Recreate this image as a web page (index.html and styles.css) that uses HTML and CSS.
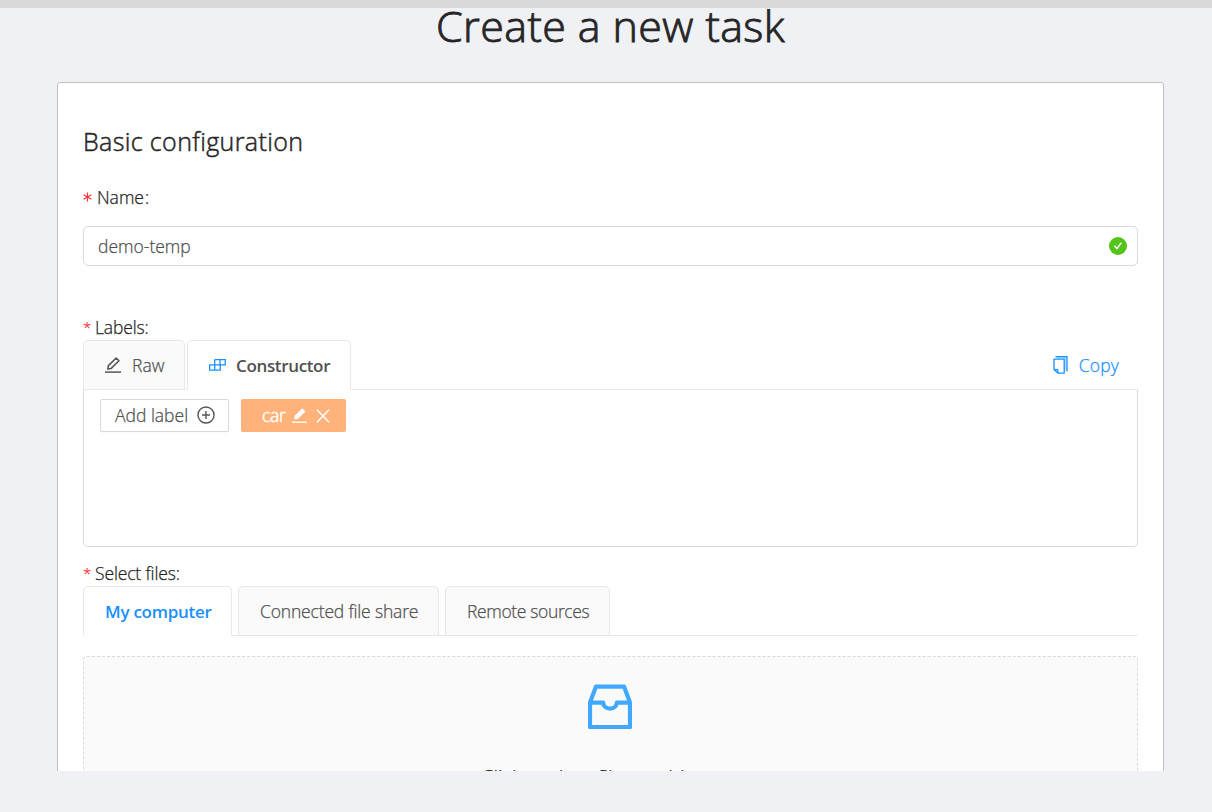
FILE: index.html
```html
<!DOCTYPE html>
<html lang="en">
<head>
<meta charset="utf-8">
<title>Create a new task</title>
<link rel="stylesheet" href="styles.css">
</head>
<body>
<div class="topbar"></div>
<main class="page">
  <h1 class="page-title">Create a new task</h1>
  <section class="card">
    <h2 class="card-title">Basic configuration</h2>
    <label class="field-label"><svg class="star" viewBox="0 0 9 10"><path d="M4.5 .5v9M.6 2.7l7.8 4.6M8.4 2.7L.6 7.3"/></svg><span>Name</span><span class="colon">:</span></label>
    <div class="input"><span>demo-temp</span>
      <svg class="ok" viewBox="0 0 18 18"><circle cx="9" cy="9" r="9" fill="#52c41a"/><path d="M5.4 8.8l2.6 2.8 4.3-6" fill="none" stroke="#fff" stroke-width="1.6"/></svg>
    </div>
    <div class="group-label labels-label"><i>*</i><span>Labels:</span></div>
    <div class="tabs">
      <div class="tab tab-raw">
        <svg class="ico-edit" viewBox="0 0 16 16" fill="none" stroke="#555"><path d="M0 15.1h16" stroke-width="1.5"/><path d="M2.8 12l.6-3.4L11.2 1l2.8 2.7-7.8 7.7z" stroke-width="1.5" stroke-linejoin="round"/></svg>
        <span>Raw</span></div>
      <div class="tab tab-constructor active">
        <svg class="ico-build" viewBox="0 0 17 12" fill="none" stroke="#1890ff" stroke-width="1.3"><path d="M5.6 .7h10.7v5.1h-5.1v5.4H.7V5.8h10.5M5.7 .7v10.5M11 .7v5.1"/></svg>
        <span>Constructor</span></div>
      <a class="copy"><svg class="ico-copy" viewBox="0 0 15 18" fill="none"><path d="M3.6 1.8h9.2v13.5" stroke="#9dd1ff" stroke-width="1.2"/><path d="M2.5 .7H14v14.6" stroke="#1890ff" stroke-width="1.3"/><path d="M1 3.2h10.2v14H5L1 13.4z" stroke="#1890ff" stroke-width="1.3" fill="#fff"/><path d="M1 13.4h4v3.8z" fill="#7dc1ff" stroke="#1890ff"/></svg><span>Copy</span></a>
    </div>
    <div class="label-box">
      <button class="add"><span>Add label</span><svg class="ico-plus" viewBox="0 0 18 18" fill="none" stroke="#555" stroke-width="1.4"><circle cx="9" cy="9" r="8"/><path d="M9 5v8M5 9h8"/></svg></button>
      <div class="chip"><span>car</span>
        <svg class="ico-pen" viewBox="0 0 15 15"><path d="M0 14.2h15" stroke="#fff" stroke-width="1.4"/><path d="M2 11.6l.7-3.8L10.3 .2l3.2 3.2-7.7 7.5z" fill="#fff"/></svg>
        <svg class="ico-x" viewBox="0 0 14 14"><path d="M1 .7l12 12.6M13 .7L1 13.3" stroke="#fff" stroke-width="1.5"/></svg></div>
    </div>
    <div class="group-label files-label"><i>*</i><span>Select files:</span></div>
    <div class="tabs">
      <div class="tab tab-my active"><span>My computer</span></div>
      <div class="tab tab-share"><span>Connected file share</span></div>
      <div class="tab tab-remote"><span>Remote sources</span></div>
    </div>
    <div class="drop">
      <svg class="ico-inbox" viewBox="0 0 44 45" fill="none" stroke="#40a9ff" stroke-width="4.2" stroke-linejoin="round"><path d="M8 2.6h28l6 16V43H2V18.6z"/><path d="M2 18.6h13.2c0 3.6 3 6 6.8 6s6.8-2.4 6.8-6H42"/></svg>
      <p class="drop-text">Click or drag files to this area</p>
    </div>
  </section>
</main>
</body>
</html>
```
FILE: styles.css
```css
* { box-sizing: border-box; }
body {
  margin: 0;
  background: #f0f1f5;
  color: #505050;
  font: 300 17.5px "Open Sans", "Noto Sans", sans-serif;
  -webkit-text-stroke: 0.25px currentColor;
}
svg { display: block; flex: none; }
span { white-space: nowrap; }

.topbar { height: 8px; background: #d9d9d9; }
.page { height: 763px; overflow: hidden; padding: 0 48px 0 57px; }
.page-title {
  height: 74px;
  margin: -12px 0 12px;
  color: #262626;
  font-size: 43px;
  font-weight: 300;
  letter-spacing: 0.4px;
  line-height: 60px;
  text-align: center;
  -webkit-text-stroke-width: 0.9px;
}

.card { height: 900px; padding: 38px 25px 0; border: 1px solid #c0c0c0; border-radius: 3px; background: #fff; }
.card-title {
  height: 40px;
  margin: 0;
  color: #262626;
  font-size: 25px;
  font-weight: 300;
  letter-spacing: 0.38px;
  line-height: 41px;
  -webkit-text-stroke-width: 0.5px;
}

.field-label { display: flex; align-items: center; height: 24px; margin-top: 24px; color: #1f1f1f; }
.colon { margin-left: 1px; }
.star { width: 9px; height: 10px; margin-right: 5px; fill: none; stroke: #ff3336; stroke-width: 1.2; }
.input {
  display: flex;
  align-items: center;
  justify-content: space-between;
  height: 40px;
  margin-top: 17px;
  padding: 0 10px 0 14px;
  border: 1px solid #d9d9d9;
  border-radius: 5px;
}
.ok { width: 18px; height: 18px; }

.group-label { display: flex; height: 24px; color: #1f1f1f; letter-spacing: -0.14px; line-height: 23px; }
.group-label i { width: 12px; color: #ff3336; font-size: 15px; font-style: normal; }
.labels-label { margin-top: 50px; }
.files-label { margin-top: 15px; }

.tabs { display: flex; height: 50px; border-bottom: 1px solid #e8e8e8; }
.tab {
  display: flex;
  align-items: center;
  height: 50px;
  padding-left: 21px;
  border: 1px solid #e8e8e8;
  border-radius: 5px 5px 0 0;
  background: #fafafa;
}
.tab.active { border-bottom-color: #fff; background: #fff; font-size: 17px; font-weight: 600; -webkit-text-stroke-width: 0; }
.tab-raw { width: 102px; margin-right: 2px; }
.tab-constructor { width: 164px; letter-spacing: -0.35px; }
.ico-edit { width: 16px; height: 16px; margin-right: 11px; }
.ico-build { width: 17px; height: 12px; margin-right: 10px; }
.copy { display: flex; align-items: center; margin: 1px 19px 0 auto; color: #1890ff; letter-spacing: 0.2px; }
.ico-copy { width: 15px; height: 18px; margin-right: 11px; }

.label-box {
  display: flex;
  align-items: flex-start;
  height: 157px;
  padding: 9px 16px;
  border: 1px solid #d9d9d9;
  border-top: 0;
  border-radius: 0 0 5px 5px;
}
.add {
  display: flex;
  align-items: center;
  width: 129px;
  height: 33px;
  padding: 0 0 0 14px;
  border: 1px solid #d9d9d9;
  border-radius: 2px;
  background: #fff;
  box-shadow: 0 2px 0 rgba(0, 0, 0, 0.015);
  color: #505050;
  font: inherit;
}
.add span, .chip span { padding-bottom: 1px; }
.ico-plus { width: 18px; height: 18px; margin: 0 13px 1px auto; }
.chip {
  display: flex;
  align-items: center;
  width: 105px;
  height: 33px;
  margin-left: 12px;
  padding: 0 16px 0 21px;
  border-radius: 2px;
  background: #ffb27a;
  color: #fff;
  letter-spacing: -0.3px;
  -webkit-text-stroke-width: 0.5px;
}
.ico-pen { width: 15px; height: 15px; margin-left: auto; margin-right: 9px; }
.ico-x { width: 14px; height: 14px; }

.tab-my { width: 149px; margin-right: 6px; color: #1890ff; letter-spacing: -0.25px; }
.tab-share { width: 201px; margin-right: 6px; letter-spacing: -0.17px; }
.tab-remote { width: 165px; letter-spacing: -0.36px; }

.drop {
  display: flex;
  flex-direction: column;
  align-items: center;
  height: 200px;
  margin-top: 20px;
  padding: 27px 1px 0 0;
  border: 1px dashed #d9d9d9;
  border-radius: 4px;
  background: #fafafa;
}
.ico-inbox { width: 44px; height: 45px; }
.drop-text { margin: 33px 0 0; color: #262626; font-size: 20px; line-height: 32px; }
```
